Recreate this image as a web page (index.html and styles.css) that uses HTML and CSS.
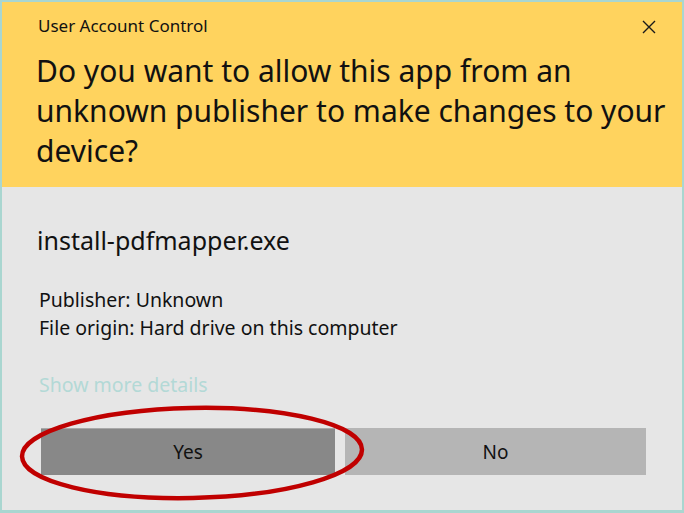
FILE: index.html
```html
<!DOCTYPE html>
<html lang="en">
<head>
    <meta charset="UTF-8">
    <meta name="viewport" content="width=device-width, initial-scale=1.0">
    <title>User Account Control</title>
    <link rel="stylesheet" href="styles.css">
</head>
<body>
    <div class="window">

        <!-- Faixa amarela -->
        <header class="top">
            <div class="title-bar">
                <span class="title">User Account Control</span>
                <span class="close">
                    <svg width="14" height="14" viewBox="0 0 14 14">
                        <path d="M1 1 L13 13 M13 1 L1 13" stroke="#1a1a1a" stroke-width="1.4" fill="none"/>
                    </svg>
                </span>
            </div>
            <h1 class="question">Do you want to allow this app from an<br>unknown publisher to make changes to your<br>device?</h1>
        </header>

        <!-- Corpo -->
        <div class="content">
            <div class="app-name">install-pdfmapper.exe</div>
            <div class="info">
                <div>Publisher: Unknown</div>
                <div>File origin: Hard drive on this computer</div>
            </div>
            <div class="more">Show more details</div>
            <div class="buttons">
                <button class="btn btn-yes">Yes</button>
                <button class="btn btn-no">No</button>
                <svg class="mark" width="360" height="104" viewBox="0 0 360 104">
                    <ellipse cx="175" cy="50" rx="170" ry="45" transform="rotate(-1.2 175 50)" stroke="#c00000" stroke-width="4.5" fill="none"/>
                </svg>
            </div>
        </div>

    </div>
</body>
</html>
```

FILE: styles.css
```css
html, body {
    margin: 0;
    padding: 0;
}
body {
    font-family: "Noto Sans", "Open Sans", sans-serif;
    color: #111;
}
.window {
    width: 684px;
    height: 513px;
    box-sizing: border-box;
    border: 2px solid #a9d6d0;
    border-bottom-width: 3px;
    background-color: #e6e6e6;
    display: flex;
    flex-direction: column;
}
.top {
    background-color: #ffd35e;
    height: 185px;
    box-sizing: border-box;
    padding: 12px 0 0 34px;
}
.title-bar {
    display: flex;
    align-items: center;
    justify-content: space-between;
    padding-right: 26px;
}
.title {
    font-size: 17px;
    padding-left: 2px;
}
.close {
    display: flex;
    padding-top: 2px;
}
.question {
    margin: 14px 0 0 0;
    font-size: 30px;
    font-weight: normal;
    line-height: 40px;
    white-space: nowrap;
}
.content {
    padding: 38px 0 0 35px;
}
.app-name {
    font-size: 25px;
    line-height: 30px;
}
.info {
    margin-top: 31px;
    padding-left: 2px;
    font-size: 19.5px;
    line-height: 28px;
}
.more {
    margin-top: 29px;
    padding-left: 2px;
    font-size: 19.5px;
    line-height: 28px;
    color: #b3d9d6;
}
.buttons {
    position: relative;
    display: flex;
    gap: 10px;
    margin-top: 29px;
    padding-left: 4px;
}
.btn {
    height: 47px;
    border: none;
    font-family: inherit;
    font-size: 19px;
    color: #111;
}
.btn-yes {
    width: 294px;
    background-color: #888888;
    border-top: 1px solid #a8a8a8;
}
.btn-no {
    width: 301px;
    background-color: #b5b5b5;
}
.mark {
    position: absolute;
    left: -20px;
    top: -25px;
}
```
